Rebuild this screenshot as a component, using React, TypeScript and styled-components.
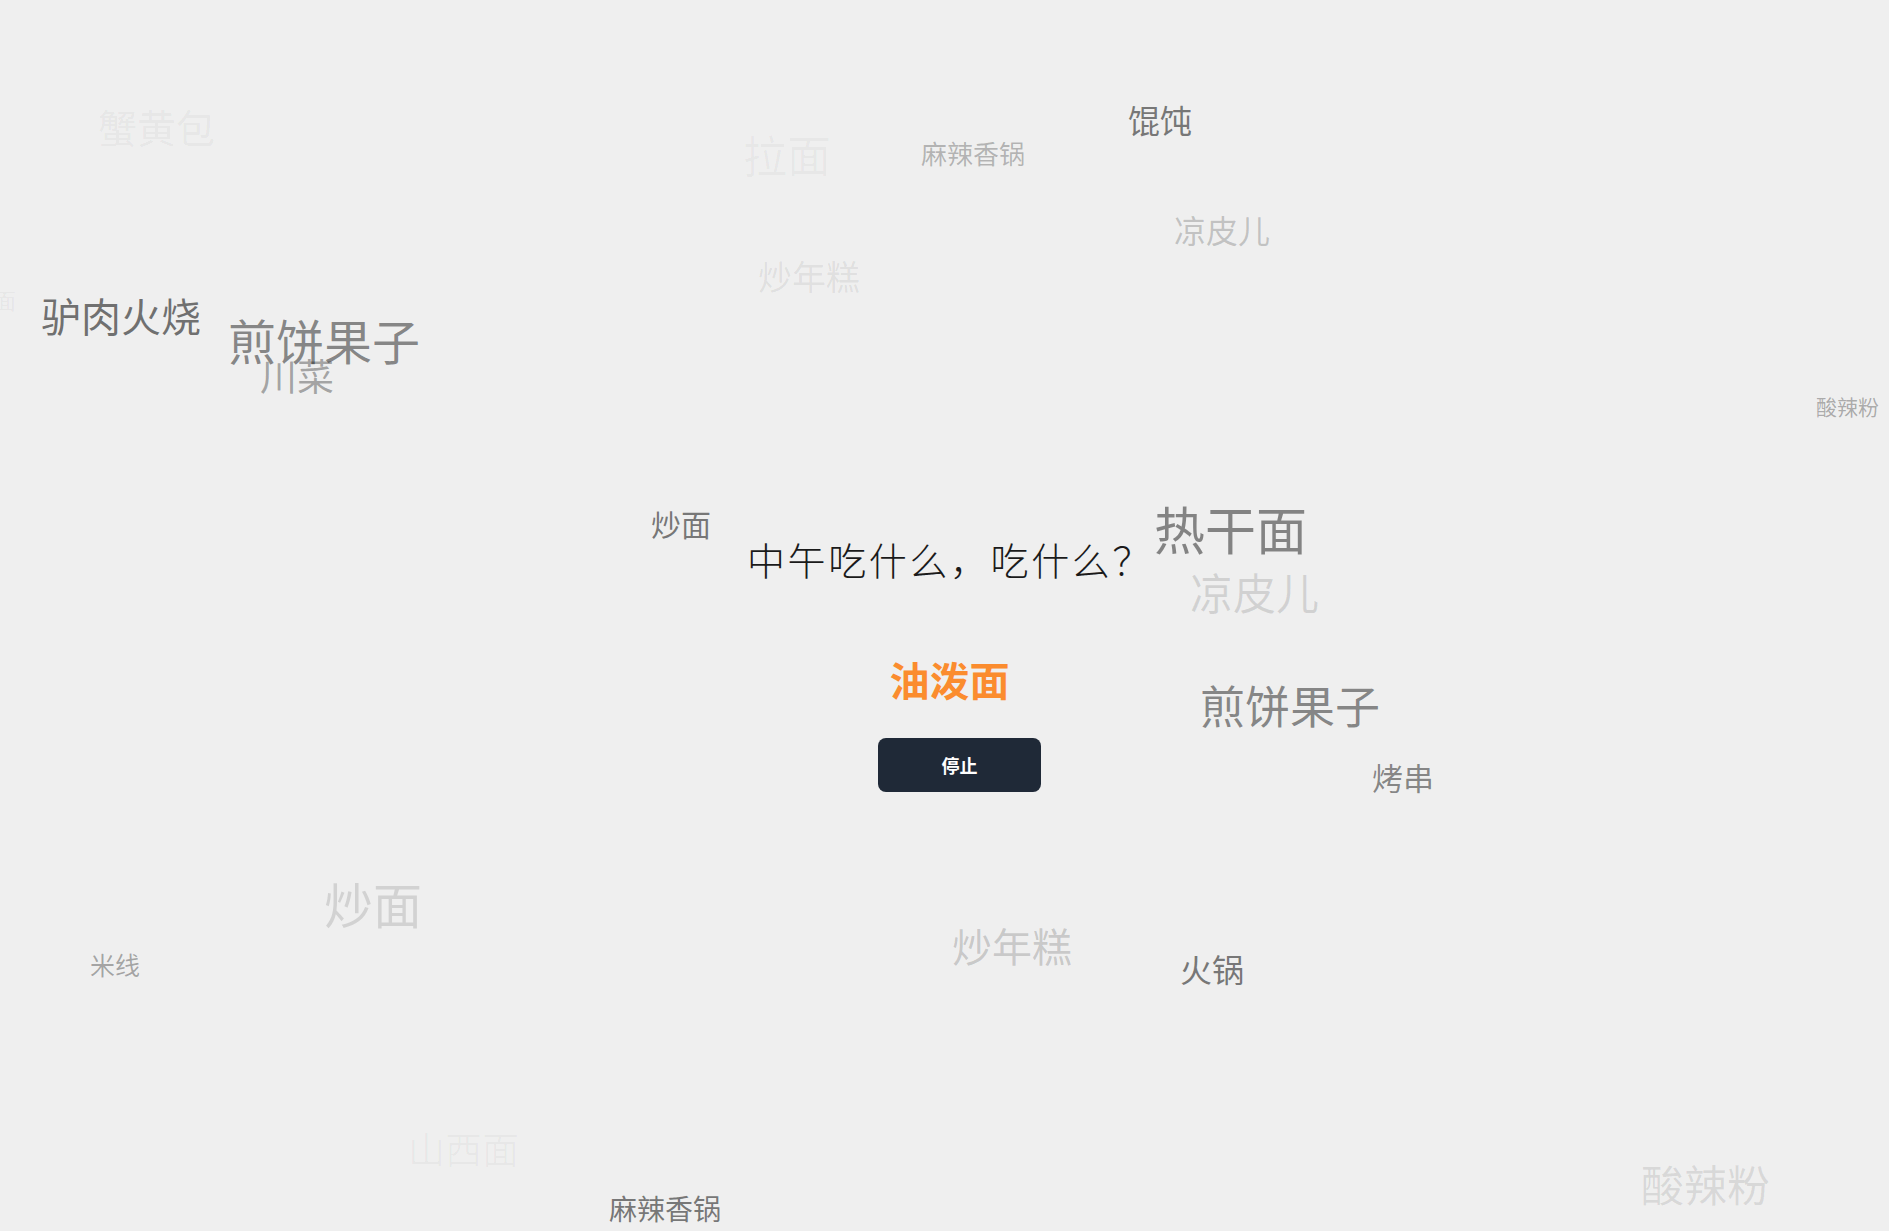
import React, { useState } from "react";
import styled, { createGlobalStyle } from "styled-components";

const GlobalStyle = createGlobalStyle`
  html, body {
    margin: 0;
    padding: 0;
    background: #efefef;
  }
  body {
    font-family: "Noto Sans CJK SC", "Noto Sans", sans-serif;
  }
`;

const foods = [
  { text: "蟹黄包", x: 98, y: 110, size: 39, alpha: 0.05 },
  { text: "拉面", x: 743, y: 135, size: 44, alpha: 0.035 },
  { text: "麻辣香锅", x: 921, y: 142, size: 26, alpha: 0.26 },
  { text: "馄饨", x: 1128, y: 105, size: 32, alpha: 0.52 },
  { text: "凉皮儿", x: 1174, y: 215, size: 32, alpha: 0.2 },
  { text: "炒年糕", x: 758, y: 261, size: 34, alpha: 0.08 },
  { text: "驴肉火烧", x: 41, y: 298, size: 40, alpha: 0.55 },
  { text: "煎饼果子", x: 228, y: 318, size: 48, alpha: 0.45 },
  { text: "川菜", x: 260, y: 360, size: 37, alpha: 0.32 },
  { text: "酸辣粉", x: 1816, y: 397, size: 21, alpha: 0.3 },
  { text: "面", x: -6, y: 290, size: 22, alpha: 0.05 },
  { text: "炒面", x: 651, y: 510, size: 30, alpha: 0.52 },
  { text: "热干面", x: 1154, y: 507, size: 51, alpha: 0.45 },
  { text: "凉皮儿", x: 1190, y: 573, size: 43, alpha: 0.13 },
  { text: "煎饼果子", x: 1200, y: 685, size: 45, alpha: 0.45 },
  { text: "烤串", x: 1372, y: 763, size: 31, alpha: 0.45 },
  { text: "炒面", x: 324, y: 881, size: 49, alpha: 0.12 },
  { text: "米线", x: 90, y: 954, size: 25, alpha: 0.32 },
  { text: "炒年糕", x: 952, y: 928, size: 40, alpha: 0.18 },
  { text: "火锅", x: 1180, y: 954, size: 32, alpha: 0.52 },
  { text: "山西面", x: 408, y: 1133, size: 37, alpha: 0.03 },
  { text: "麻辣香锅", x: 609, y: 1196, size: 28, alpha: 0.52 },
  { text: "酸辣粉", x: 1641, y: 1165, size: 43, alpha: 0.1 },
];

const Page = styled.div`
  position: relative;
  width: 100%;
  height: 100vh;
  overflow: hidden;
  background: #efefef;
`;

const Word = styled.span<{ $size: number; $alpha: number }>`
  position: absolute;
  white-space: nowrap;
  font-size: ${(p) => p.$size}px;
  line-height: 1;
  color: rgba(0, 0, 0, ${(p) => p.$alpha});
  pointer-events: none;
  user-select: none;
`;

const Center = styled.main`
  position: relative;
  z-index: 1;
  display: flex;
  flex-direction: column;
  align-items: center;
  padding-top: 540px;
`;

const Title = styled.h1`
  margin: 0 0 0 11px;
  font-size: 38px;
  line-height: 1;
  font-weight: 300;
  color: #1a1a1a;
  letter-spacing: 2.6px;
`;

const Result = styled.div`
  margin: 81px 0 0 10px;
  font-size: 40px;
  line-height: 1;
  font-weight: 700;
  color: #fb8c2e;
`;

const StopButton = styled.button`
  margin: 39px 0 0 30px;
  width: 163px;
  height: 54px;
  border: none;
  border-radius: 8px;
  background: #1f2937;
  color: #ffffff;
  font-family: "Noto Sans CJK SC", sans-serif;
  font-size: 18px;
  font-weight: 700;
  cursor: pointer;
`;

const App: React.FC = () => {
  const [running, setRunning] = useState(true);

  return (
    <Page>
      <GlobalStyle />
      {foods.map((f, i) => (
        <Word
          key={i}
          $size={f.size}
          $alpha={f.alpha}
          style={{ left: f.x, top: f.y - Math.round(f.size * 0.07) }}
        >
          {f.text}
        </Word>
      ))}
      <Center>
        <Title>中午吃什么，吃什么？</Title>
        <Result>油泼面</Result>
        <StopButton onClick={() => setRunning(!running)}>
          {running ? "停止" : "开始"}
        </StopButton>
      </Center>
    </Page>
  );
};

export default App;
